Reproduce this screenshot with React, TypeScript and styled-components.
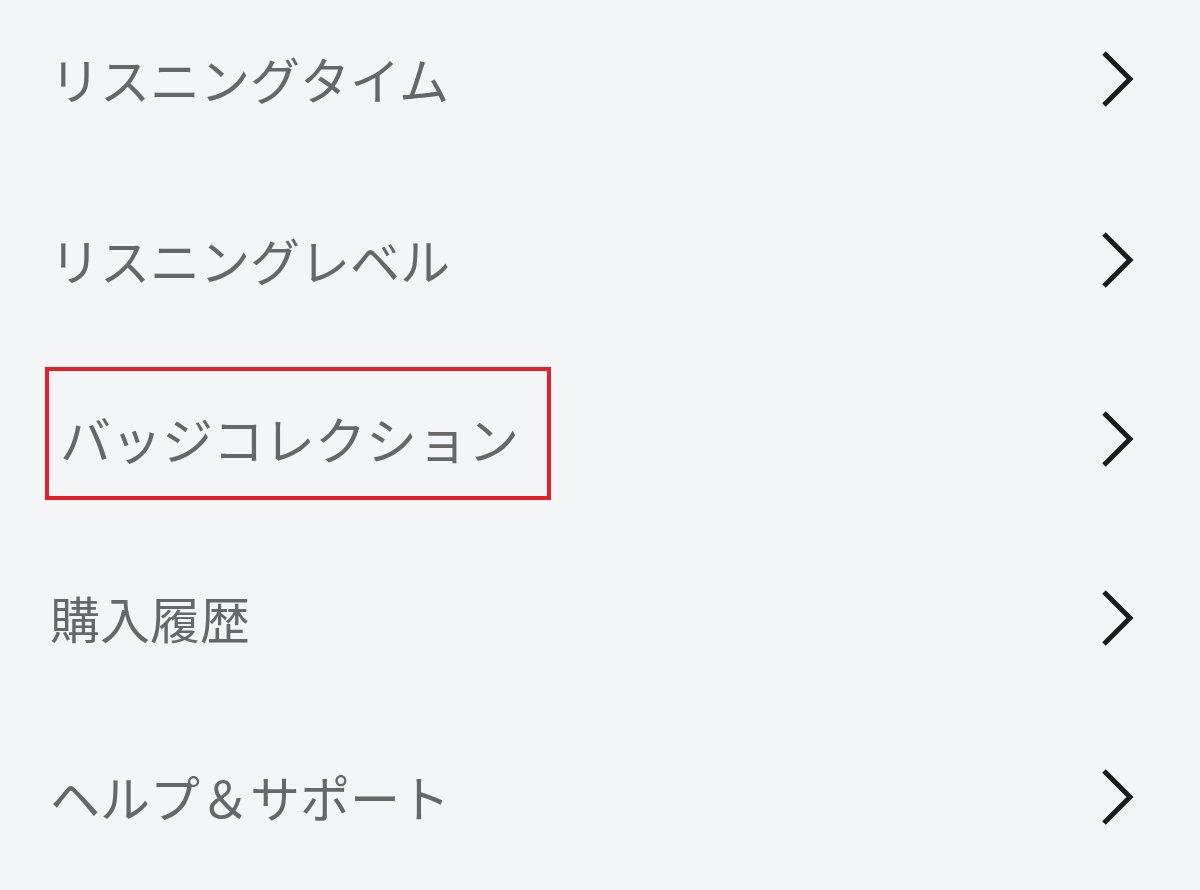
import React from "react";
import styled, { createGlobalStyle } from "styled-components";

const GlobalStyle = createGlobalStyle`
  html, body {
    margin: 0;
    padding: 0;
    background-color: #f4f5f7;
  }
  body {
    font-family: "Noto Sans CJK JP", "Noto Sans", sans-serif;
  }
`;

const MenuList = styled.div`
  width: 1200px;
  height: 890px;
  display: flex;
  flex-direction: column;
  gap: 15px;
  background-color: #f4f5f7;
  overflow: hidden;
`;

const MenuRow = styled.div`
  height: 164px;
  display: flex;
  align-items: center;
  justify-content: space-between;
  padding: 0 62px 0 50px;
  flex-shrink: 0;

  &:first-child {
    margin-top: -4px;
    margin-bottom: 2px;
  }
`;

const Label = styled.span<{ $highlighted?: boolean }>`
  position: relative;
  font-size: ${(p) => (p.$highlighted ? "51px" : "50px")};
  line-height: 72px;
  font-weight: 400;
  color: #676767;
  padding-left: ${(p) => (p.$highlighted ? "10px" : "0")};

  &::after {
    content: "";
    display: ${(p) => (p.$highlighted ? "block" : "none")};
    position: absolute;
    left: -5px;
    right: -32px;
    top: -35px;
    bottom: -26px;
    border: 4px solid #e3202b;
  }
`;

const Chevron = () => (
  <svg width="40" height="60" viewBox="0 0 40 60" fill="none">
    <path
      d="M6 5 L32 31 L6 57"
      stroke="#1c1c1c"
      strokeWidth="5"
      strokeLinecap="butt"
      strokeLinejoin="miter"
    />
  </svg>
);

const ITEMS = [
  { title: "リスニングタイム" },
  { title: "リスニングレベル" },
  { title: "バッジコレクション", highlighted: true },
  { title: "購入履歴" },
  { title: "ヘルプ＆サポート" },
];

const App = () => {
  return (
    <>
      <GlobalStyle />
      <MenuList>
        {ITEMS.map((item) => (
          <MenuRow key={item.title}>
            <Label $highlighted={item.highlighted}>{item.title}</Label>
            <Chevron />
          </MenuRow>
        ))}
      </MenuList>
    </>
  );
};

export default App;
